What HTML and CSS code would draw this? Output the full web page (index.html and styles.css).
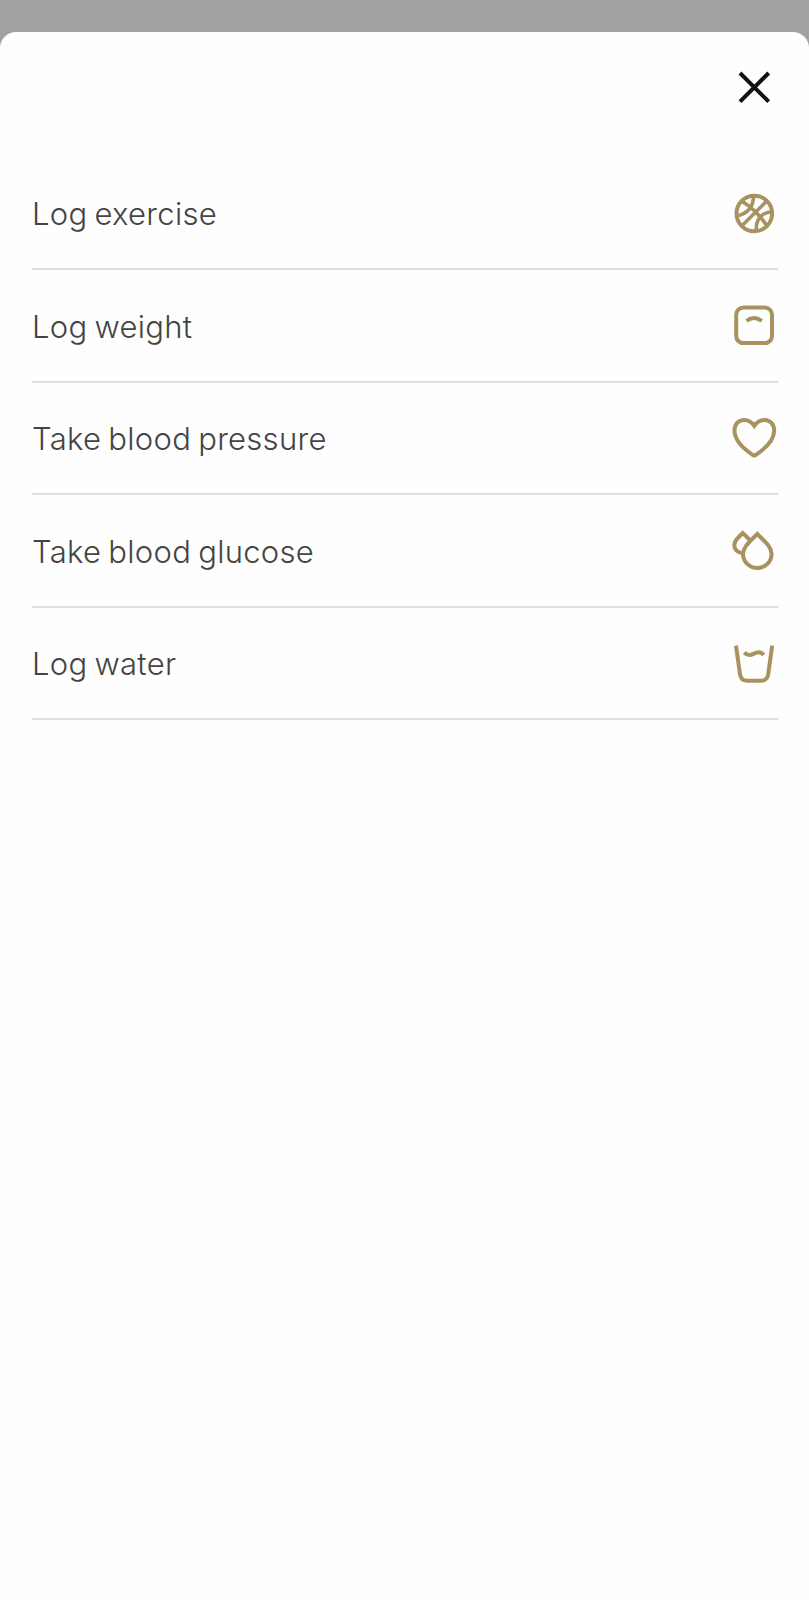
FILE: index.html
```html
<!DOCTYPE html>
<html lang="en">
<head>
<meta charset="utf-8">
<title>Log</title>
<link rel="stylesheet" href="styles.css">
</head>
<body>
<main class="sheet">
  <header class="sheet-header">
    <button class="close" aria-label="Close"><svg class="icon" viewBox="6 6 48 48"><path d="M16 16 44.7 44.7M44.7 16 16 44.7"/></svg></button>
  </header>
  <ul class="actions">
    <li class="action"><span class="label">Log exercise</span>
      <svg class="icon" viewBox="5.5 4.5 48 48"><circle cx="29.8" cy="29" r="17.8"/><path class="seam" d="M42.4 16.4 17.2 41.6M17 16.8C24 20 36 31 42.5 41.5M29 11.5C29 22 23 29 12.3 31.5M47.4 27.3C37 28 31 35 31.8 46.5"/></svg></li>
    <li class="action"><span class="label">Log weight</span>
      <svg class="icon" viewBox="6 5.3 48 48"><rect x="12.2" y="11.8" width="35.8" height="35.6" rx="7.2"/><path d="M22.5 25.3Q30 19.3 37.8 25.3"/></svg></li>
    <li class="action"><span class="label">Take blood pressure</span>
      <svg class="icon" viewBox="6 5.8 48 48"><path d="M30.3 17.6C27.5 13.6 24 11.8 20.3 11.8C14.5 11.8 10.5 16.2 10.5 22.3C10.5 32 18 39.5 28.6 46.6Q30.3 47.7 32 46.6C42.7 39.5 50.2 32 50.2 22.3C50.2 16.2 46.2 11.8 40.4 11.8C36.7 11.8 33.1 13.6 30.3 17.6Z"/></svg></li>
    <li class="action"><span class="label">Take blood glucose</span>
      <svg class="icon" viewBox="6 6.3 48 48"><path d="M33.3 14.2C25 22.5 19 27.5 19 34.3A14.3 14 0 0 0 47.6 34.3C47.6 27.5 41.6 22.5 33.3 14.2ZM25.3 19.8 18.7 13.3C13 19 10.3 21.5 10.3 25.8C10.3 29.8 14 33 18.8 33.5"/></svg></li>
    <li class="action"><span class="label">Log water</span>
      <svg class="icon" viewBox="6 5.7 48 48"><path d="M12 12.3 16 41Q17 47.4 22.8 47.4H37.4Q43.2 47.4 44.2 41L48.2 12.3M20.3 19.2C28 27 32 13.5 39.7 21.5"/></svg></li>
  </ul>
</main>
</body>
</html>
```
FILE: styles.css
```css
body {
  margin: 0;
  padding-top: 32px;
  min-height: 1568px;
  background: #a1a1a1;
  font-family: Inter, "Liberation Sans", sans-serif;
}

.sheet {
  min-height: 1568px;
  border-radius: 16px 16px 0 0;
  background: #fefefe;
}

.sheet-header {
  display: flex;
  justify-content: flex-end;
  height: 125.7px;
  padding: 31px 31px 0;
  box-sizing: border-box;
}

.close {
  width: 48px;
  height: 48px;
  padding: 0;
  border: 0;
  background: none;
  color: #111;
}

.icon {
  display: block;
  width: 48px;
  height: 48px;
  flex: none;
  fill: none;
  stroke: currentColor;
  stroke-width: 4;
}

.seam {
  stroke-width: 3.6;
}

.actions {
  margin: 0;
  padding: 0 31px 0 32px;
  list-style: none;
}

.action {
  display: flex;
  align-items: center;
  justify-content: space-between;
  height: 112.5px;
  box-sizing: border-box;
  border-bottom: 2px solid #dedede;
  color: #a8925f;
}

.label {
  padding-top: 2px;
  color: #444;
  font-size: 31px;
  font-weight: 300;
  letter-spacing: 0.3px;
  word-spacing: -2px;
}
```
